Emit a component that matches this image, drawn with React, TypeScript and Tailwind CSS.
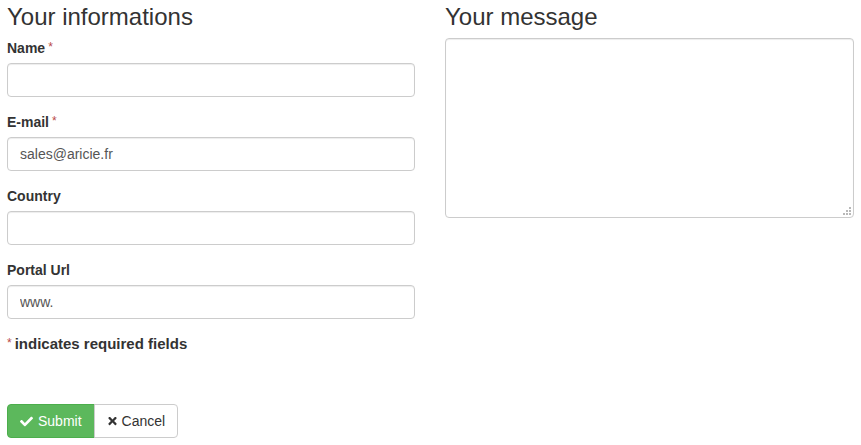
import React from "react";
import { FaCheck, FaTimes } from "react-icons/fa";

const font = { fontFamily: '"Liberation Sans", Arial, sans-serif' };

function Req() {
  return <span className="ml-[3px] align-top text-[12px] leading-[18px] font-normal text-[#b94a48]">*</span>;
}

function Field({ label, required, value }: { label: string; required?: boolean; value?: string }) {
  return (
    <div className="mb-[15px]">
      <label className="mb-[5px] block h-[20px] text-[14px] font-bold leading-[20px] text-[#333]">
        {label}
        {required && <Req />}
      </label>
      <input
        type="text"
        defaultValue={value}
        className="block h-[34px] w-full rounded-[4px] border border-[#ccc] bg-white px-[12px] py-[6px] text-[14px] leading-[20px] text-[#555] shadow-[inset_0_1px_1px_rgba(0,0,0,0.075)] outline-none"
      />
    </div>
  );
}

function Dot() {
  return <span className="block h-[2px] w-[2px] bg-[#b8b8b8]" />;
}

export default function App() {
  return (
    <div className="min-h-[445px] w-[861px] bg-white text-[#333]" style={font}>
      <div className="grid grid-cols-[408px_1fr] gap-[30px] px-[7px]">
        <div>
          <h3 className="mt-[4px] mb-[8px] text-[24px] font-normal leading-[26.4px] text-[#333]">Your informations</h3>
          <Field label="Name" required />
          <Field label="E-mail" required value="sales@aricie.fr" />
          <Field label="Country" />
          <Field label="Portal Url" value="www." />
          <p className="h-[20px] text-[15px] font-bold leading-[20px] text-[#333]">
            <span className="mr-[3px] align-top text-[12px] leading-[18px] font-normal text-[#b94a48]">*</span>indicates required fields
          </p>
          <div className="mt-[50px] flex">
            <button className="flex h-[34px] items-center gap-[5px] rounded-l-[4px] border border-[#4cae4c] bg-[#5cb85c] px-[12px] text-[14px] text-white">
              <FaCheck className="h-[13px] w-[13px]" />
              Submit
            </button>
            <button className="-ml-px flex h-[34px] items-center gap-[4px] rounded-r-[4px] border border-[#ccc] bg-white px-[12px] text-[14px] text-[#333]">
              <FaTimes className="h-[12px] w-[11px]" />
              Cancel
            </button>
          </div>
        </div>
        <div>
          <h3 className="mt-[4px] mb-[8px] text-[24px] font-normal leading-[26.4px] text-[#333]">Your message</h3>
          <div className="relative">
            <textarea className="block h-[180px] w-full resize-none rounded-[4px] border border-[#ccc] bg-white px-[12px] py-[6px] text-[14px] text-[#555] shadow-[inset_0_1px_1px_rgba(0,0,0,0.075)] outline-none" />
            <div className="absolute right-[3px] bottom-[3px] grid grid-cols-3 gap-[1px]">
              <span />
              <span />
              <Dot />
              <span />
              <Dot />
              <Dot />
              <Dot />
              <Dot />
              <Dot />
            </div>
          </div>
        </div>
      </div>
    </div>
  );
}
